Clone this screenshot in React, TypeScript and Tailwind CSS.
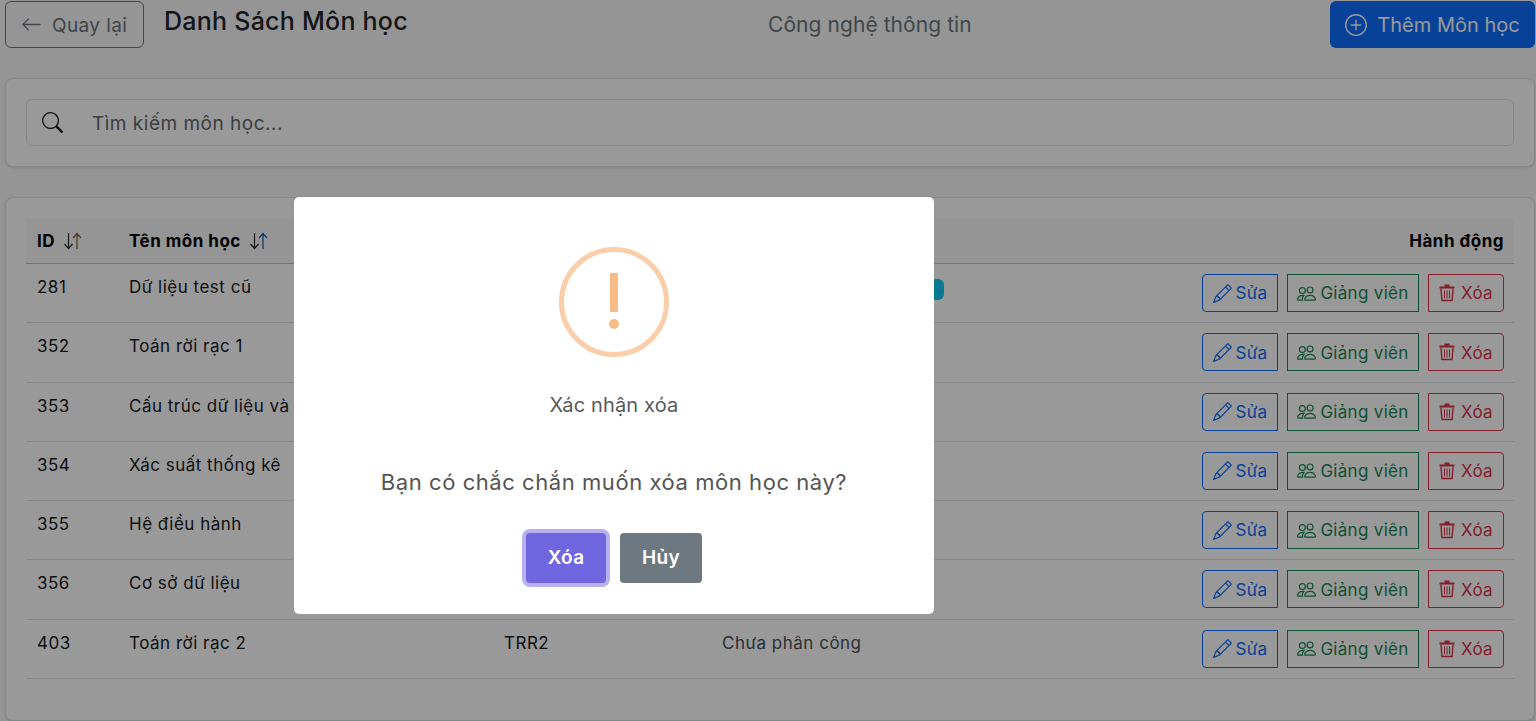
import { BsArrowLeft, BsPlusCircle, BsSearch, BsPencil, BsPeople } from "react-icons/bs";

const rows = [
  { id: "281", name: "Dữ liệu test cũ", badge: true },
  { id: "352", name: "Toán rời rạc 1" },
  { id: "353", name: "Cấu trúc dữ liệu và giải thuật" },
  { id: "354", name: "Xác suất thống kê" },
  { id: "355", name: "Hệ điều hành" },
  { id: "356", name: "Cơ sở dữ liệu" },
  { id: "403", name: "Toán rời rạc 2", code: "TRR2", lecturer: "Chưa phân công" },
];

function SortIcon({ up }: { up: string }) {
  return (
    <svg width="20" height="18" viewBox="0 0 20 18" className="inline-block ml-[8px] align-[-3px]" fill="none" strokeWidth="1.2">
      <path d="M5.5 1v15M1.5 12l4 4.5 4-4.5" stroke="#212529" />
      <path d="M14 17V2M10 6l4-4.5 4 4.5" stroke={up} />
    </svg>
  );
}

function TrashIcon() {
  return (
    <svg width="16" height="18" viewBox="0 0 16 18" className="shrink-0">
      <path d="M0.5 2.5h15v2h-15zM5.5 2.5v-2h5v2z" fill="#dc3545" />
      <path d="M2 4.5l.9 12h10.2l.9-12" fill="none" stroke="#dc3545" strokeWidth="1.4" />
      <path d="M5.5 6.5v8M8 6.5v8M10.5 6.5v8" stroke="#dc3545" strokeWidth="1" />
    </svg>
  );
}

export default function App() {
  return (
    <div className="h-[721px] w-[1536px] overflow-hidden bg-[#f8f9fa] font-['Inter',sans-serif] text-[#212529] relative">
      <div className="flex items-start h-[78px] pl-[5px] pr-px pt-px">
        <button className="flex items-center h-[47px] w-[139px] pl-[15px] border border-[#6c757d] rounded-md text-[#6c757d] text-[19px] tracking-[0.4px]">
          <BsArrowLeft className="w-[21px] h-[21px] mr-[10px]" />
          <span className="pt-[4px]">Quay lại</span>
        </button>
        <h1 className="ml-[20px] w-[604px] text-[25px] tracking-[0.25px] leading-[40px] font-medium">Danh Sách Môn học</h1>
        <div className="w-[562px] text-[21px] tracking-[0.07px] leading-[48px] text-[#6c757d]">Công nghệ thông tin</div>
        <button className="flex items-center justify-center h-[47px] w-[205px] bg-[#0d6efd] text-white rounded-md text-[20px]">
          <BsPlusCircle className="w-[22px] h-[22px] mr-[10px]" />
          Thêm Môn học
        </button>
      </div>

      <div className="ml-[5px] mr-[1px] h-[89px] p-[20px] bg-white border border-[#dee2e6] rounded-lg shadow-sm">
        <div className="flex items-center h-[47px] border border-[#dee2e6] rounded-md pl-[15px]">
          <BsSearch className="w-[21px] h-[21px] text-[#212529]" />
          <span className="ml-[29px] pt-[4px] text-[19px] tracking-[0.5px] text-[#5f6870]">Tìm kiếm môn học...</span>
        </div>
      </div>

      <div className="ml-[5px] mr-[1px] mt-[30px] h-[524px] px-[20px] pt-[20px] bg-white border border-[#dee2e6] rounded-lg shadow-sm">
        <div className="flex items-center h-[46px] pt-[2px] bg-[#f8f9fa] border-b border-[#bcc0c4] pl-[11px] pr-[10px] text-black font-bold text-[17px] tracking-[0.5px]">
          <span className="w-[92px]">ID<SortIcon up="#8a5a20" /></span>
          <span>Tên môn học<SortIcon up="#0d5aa8" /></span>
          <span className="ml-auto">Hành động</span>
        </div>
        {rows.map((r) => (
          <div key={r.id} className="flex h-[59.3px] border-b border-[#dee2e6] pl-[11px] pr-[10px] text-[17px] tracking-[0.5px] text-[#16191c]">
            <span className="w-[92px] pt-[11px] leading-[24px]">{r.id}</span>
            <span className="w-[375px] pt-[11px] leading-[24px]">{r.name}</span>
            <span className="w-[218px] pt-[11px] leading-[24px]">{r.code}</span>
            <span className="pt-[11px] leading-[24px] text-[#495057]">{r.lecturer}</span>
            {r.badge && <span className="ml-[200px] mt-[15px] h-[21px] w-[22px] rounded-md bg-[#0dcaf0]" />}
            <div className="ml-auto flex items-start gap-[9px] pt-[10px] tracking-[0.3px]">
              <button className="flex items-center justify-center h-[38px] w-[76px] gap-[4px] border border-[#0d6efd] rounded-l text-[#0d6efd]">
                <BsPencil className="w-[19px] h-[19px]" /><span className="pt-[2px]">Sửa</span>
              </button>
              <button className="flex items-center justify-center h-[38px] w-[132px] gap-[4px] border border-[#198754] text-[#198754]">
                <BsPeople className="w-[19px] h-[19px]" /><span className="pt-[2px]">Giảng viên</span>
              </button>
              <button className="flex items-center justify-center h-[38px] w-[76px] gap-[6px] border border-[#dc3545] rounded-r text-[#dc3545]">
                <TrashIcon /><span className="pt-[2px]">Xóa</span>
              </button>
            </div>
          </div>
        ))}
      </div>

      <div className="absolute inset-0 bg-black/40" />
      <div className="absolute left-[294px] top-[197px] w-[640px] h-[417px] bg-white rounded-[5px] flex flex-col items-center">
        <div className="mt-[50px] w-[110px] h-[110px] rounded-full border-[5px] border-[#facea8] flex items-center justify-center">
          <svg width="12" height="56" viewBox="0 0 12 56" className="mt-[-2px]">
            <rect x="2" y="0" width="8" height="39" rx="1" fill="#f8bb86" />
            <circle cx="6" cy="51" r="5" fill="#f8bb86" />
          </svg>
        </div>
        <h2 className="mt-[33px] text-[20px] leading-[30px] font-normal tracking-[0.15px] text-[#595959]">Xác nhận xóa</h2>
        <p className="mt-[47px] text-[22px] leading-[30px] tracking-[0.56px] text-[#545454]">Bạn có chắc chắn muốn xóa môn học này?</p>
        <div className="mt-[36px] flex items-center gap-[14px]">
          <button className="h-[50px] w-[80px] rounded-[4px] bg-[#7066e0] text-white font-semibold text-[19px] tracking-[0.3px] ring-4 ring-[#b7b2ef]">Xóa</button>
          <button className="h-[50px] w-[82px] rounded-[4px] bg-[#6e7881] text-white font-semibold text-[19px] tracking-[0.3px]">Hủy</button>
        </div>
      </div>
    </div>
  );
}
